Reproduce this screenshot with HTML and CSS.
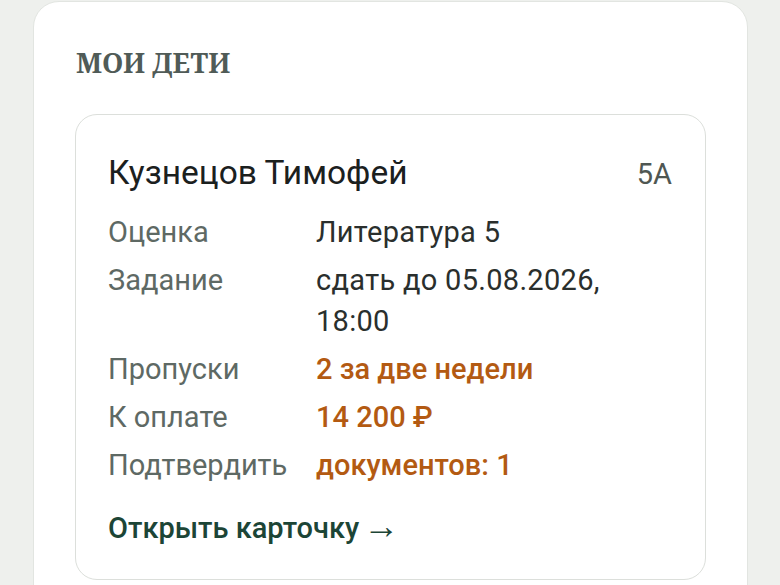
FILE: index.html
```html
<!DOCTYPE html>
<html><head><meta charset="utf-8">
<title>Мои дети</title>
<link rel="stylesheet" href="styles.css">
</head><body>

<section class="panel">
	<h2 class="panel-title">Мои дети</h2>

	<div class="child">
		<div class="child-head">
			<span class="child-name">Кузнецов Тимофей</span>
			<span class="child-class">5А</span>
		</div>
		<dl class="facts">
			<dt>Оценка</dt>
			<dd>Литература 5</dd>
			<dt>Задание</dt>
			<dd>сдать до 05.08.2026, 18:00</dd>
			<dt>Пропуски</dt>
			<dd class="warn">2 за две недели</dd>
			<dt>К оплате</dt>
			<dd class="warn">14 200 ₽</dd>
			<dt>Подтвердить</dt>
			<dd class="warn">документов: 1</dd>
		</dl>
		<a class="open" href="#">Открыть карточку <span class="arrow">→</span></a>
	</div>
</section>

</body></html>
```

FILE: styles.css
```css
body {
	margin: 0;
	padding: 1px 32px 0 33px;
	background: #eef0ed;
	font-family: Roboto, "Noto Sans", sans-serif;
	color: #2a2f2d;
}
.panel {
	background: #fff;
	border: 1px solid #e2e5e1;
	border-radius: 26px;
	padding: 44px 41px 40px 41px;
}
.panel-title {
	margin: 0 0 34px 1px;
	font-family: "Noto Serif", "DejaVu Serif", serif;
	font-size: 27px;
	line-height: 34px;
	font-weight: bold;
	text-transform: uppercase;
	color: #505b57;
}
.child {
	border: 1px solid #dcdfdb;
	border-radius: 22px;
	padding: 38px 33px 30px 32px;
}
.child-head {
	display: flex;
	justify-content: space-between;
	align-items: baseline;
	margin-bottom: 18px;
	line-height: 40px;
}
.child-name {
	font-size: 33.5px;
	color: #1b201e;
}
.child-class {
	font-size: 29px;
	color: #4f5753;
}
.facts {
	display: grid;
	grid-template-columns: 208px 1fr;
	row-gap: 7px;
	margin: 0;
	font-size: 29px;
	line-height: 41px;
}
.facts dt {
	color: #5e6964;
}
.facts dd {
	margin: 0;
	max-width: 330px;
	letter-spacing: 0.3px;
}
.facts .warn {
	color: #b35a12;
	font-weight: 500;
	letter-spacing: 0;
}
.open {
	display: inline-block;
	margin-top: 22px;
	font-size: 29px;
	line-height: 41px;
	font-weight: 500;
	color: #1c4536;
	text-decoration: none;
}
.arrow {
	font-family: "Liberation Serif", serif;
	font-size: 36px;
	line-height: 1;
	font-weight: normal;
	margin-left: -3px;
}
```
